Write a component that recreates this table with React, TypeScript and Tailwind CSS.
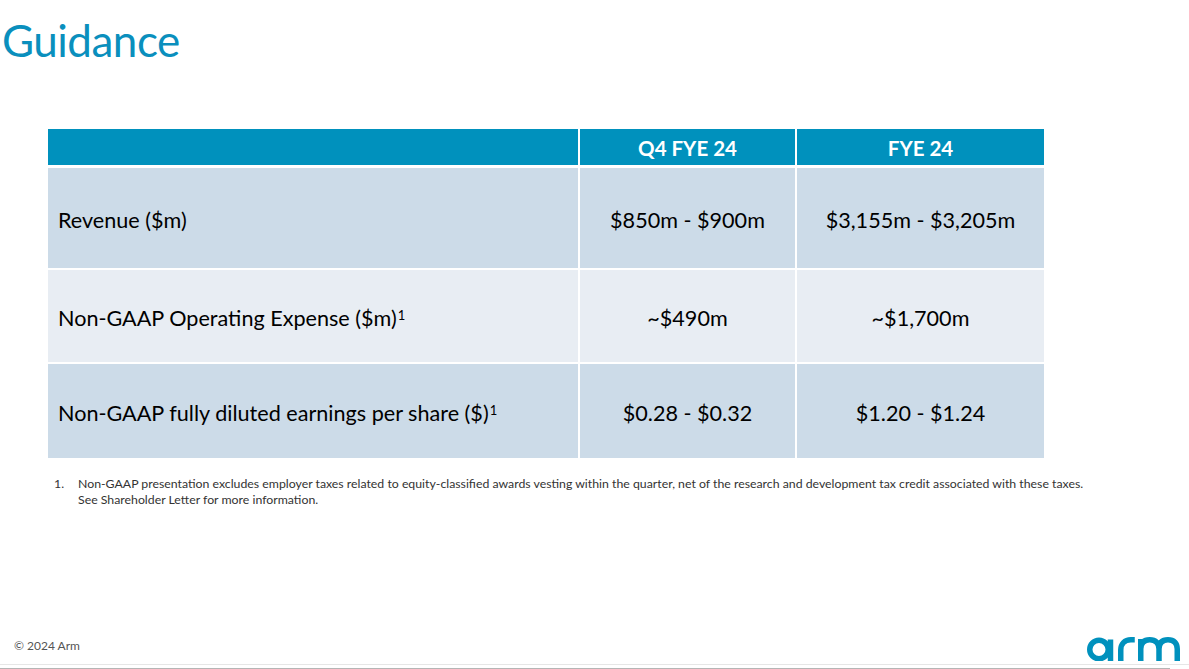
const rows = [
  { label: 'Revenue ($m)', sup: false, q4: '$850m - $900m', fy: '$3,155m - $3,205m', tone: 'dark', h: 'h-[100px]' },
  { label: 'Non-GAAP Operating Expense ($m)', sup: true, q4: '~$490m', fy: '~$1,700m', tone: 'light', h: 'h-[92px]' },
  { label: 'Non-GAAP fully diluted earnings per share ($)', sup: true, q4: '$0.28 - $0.32', fy: '$1.20 - $1.24', tone: 'dark', h: 'h-[94px]' },
];

function ArmLogo() {
  return (
    <svg width="94" height="24" viewBox="0 0 94 24" fill="none" stroke="#0091bd" strokeWidth="5.5">
      {/* a */}
      <ellipse cx="12" cy="12.5" rx="9.25" ry="9.25" />
      <line x1="23.5" y1="2.5" x2="23.5" y2="24" />
      {/* r */}
      <path d="M33.75 24V13c0-6 4-10.25 10-10.25h4" />
      {/* m */}
      <path d="M53.75 24V2M53.75 12c0-6 3-9.25 9-9.25s9.25 3.25 9.25 9.25v12M72 12c0-6 3-9.25 9-9.25s9.25 3.25 9.25 9.25v12" />
    </svg>
  );
}

export default function App() {
  return (
    <div className="relative flex h-[669px] w-[1189px] flex-col overflow-hidden bg-white font-['Lato','Open_Sans',sans-serif]">
      <h1 className="ml-[2px] mt-[12px] text-[44px] leading-[56px] tracking-[-0.5px] text-[#0a8fbd]">
        Guidance
      </h1>

      <div className="ml-[48px] mt-[61px] grid w-[996px] grid-cols-[530px_215px_247px] gap-x-[2px]">
        <div className="h-[36px] bg-[#0091bd]" />
        <div className="flex h-[36px] items-center justify-center pt-[2px] bg-[#0091bd] text-[20.5px] font-bold text-white">
          Q4 FYE 24
        </div>
        <div className="flex h-[36px] items-center justify-center pt-[2px] bg-[#0091bd] text-[20.5px] font-bold text-white">
          FYE 24
        </div>

        {rows.map((row, i) => {
          const bg = row.tone === 'dark' ? 'bg-[#ccdbe8]' : 'bg-[#e8edf3]';
          const top = i === 0 ? 'mt-[3px]' : 'mt-[2px]';
          return [
            <div key={`l${i}`} className={`${top} ${row.h} ${bg} flex items-center pl-[10px] pt-[4px] text-[21.6px] text-black`}>
              <span>
                {row.label}
                {row.sup && <span className="ml-[1px] align-[6px] text-[13px]">1</span>}
              </span>
            </div>,
            <div key={`q${i}`} className={`${top} ${row.h} ${bg} flex items-center justify-center pt-[4px] text-[21.6px] text-black`}>
              {row.q4}
            </div>,
            <div key={`f${i}`} className={`${top} ${row.h} ${bg} flex items-center justify-center pt-[4px] text-[21.6px] text-black`}>
              {row.fy}
            </div>,
          ];
        })}
      </div>

      <div className="ml-[54px] mt-[18px] flex text-[12.3px] leading-[16px] text-[#333]">
        <span className="w-[24px]">1.</span>
        <p>
          Non-GAAP presentation excludes employer taxes related to equity-classified awards vesting within the quarter, net of the research and development tax credit associated with these taxes.
          <br />
          See Shareholder Letter for more information.
        </p>
      </div>

      <div className="mt-auto flex items-end justify-between">
        <span className="mb-[9px] ml-[14px] text-[12px] text-[#555]">© 2024 Arm</span>
        <div className="mb-[3px] mr-[8px]">
          <ArmLogo />
        </div>
      </div>
      <div className="h-[1px] bg-[#e6e6e6]" />
      <div className="h-[3px]" />
      <div className="h-[1px] w-[1170px] bg-[#b5b5b5]" />
    </div>
  );
}
